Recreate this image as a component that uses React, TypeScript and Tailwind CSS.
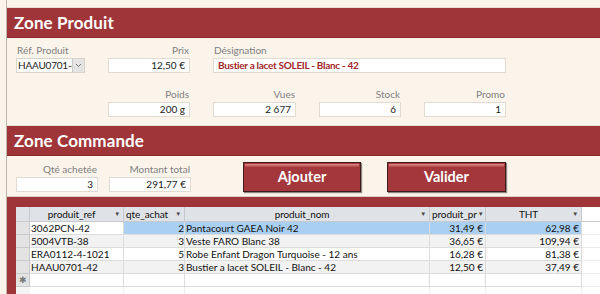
import React from 'react';

// ── Small pieces ─────────────────────────────────────────────────────────────
function Label({ text, right }: { text: string; right?: boolean }) {
  return (
    <div className={`h-[12px] text-[10px] leading-[12px] text-[#808080] ${right ? 'text-right pr-[1px]' : 'pl-[1px]'}`}>
      {text}
    </div>
  );
}

function Box({ value, className = '' }: { value: string; className?: string }) {
  return (
    <div
      className={`mt-[2px] h-[15px] bg-white border border-[#e3dbd0] text-[10px] leading-[13px] text-[#222] text-right pr-[4px] ${className}`}
    >
      {value}
    </div>
  );
}

function Band({ title }: { title: string }) {
  return (
    <div className="h-[31px] shrink-0 bg-[#9f3539] border-t border-[#e9dcd0] border-b border-b-[#8c2a2e] flex items-center pl-[7px]">
      <span className="text-white font-bold text-[17px] tracking-[0.1px]">{title}</span>
    </div>
  );
}

function Button({ text, className = '' }: { text: string; className?: string }) {
  return (
    <div
      className={`h-[30px] bg-[#a3373b] border border-[#3e1c1d] shadow-[1px_1px_1px_rgba(0,0,0,0.45)] relative flex items-center justify-center ${className}`}
    >
      <div className="absolute left-[1px] right-[1px] top-[1px] h-[3px] bg-gradient-to-b from-[#e08a8b] to-[#b04548]" />
      <span className="text-white font-bold text-[14.5px] relative">{text}</span>
    </div>
  );
}

// ── Datasheet ────────────────────────────────────────────────────────────────
const rows = [
  { ref: '3062PCN-42', qte: '2', nom: 'Pantacourt GAEA Noir 42', pr: '31,49 €', tht: '62,98 €' },
  { ref: '5004VTB-38', qte: '3', nom: 'Veste FARO Blanc 38', pr: '36,65 €', tht: '109,94 €' },
  { ref: 'ERA0112-4-1021', qte: '5', nom: 'Robe Enfant Dragon Turquoise - 12 ans', pr: '16,28 €', tht: '81,38 €' },
  { ref: 'HAAU0701-42', qte: '3', nom: 'Bustier a lacet SOLEIL - Blanc - 42', pr: '12,50 €', tht: '37,49 €' },
];

function Arrow() {
  return <span className="text-[6px] leading-none text-[#444] pr-[3px] pl-[1px]">▼</span>;
}

function HeadCell({ text, w, center = true }: { text: string; w: string; center?: boolean }) {
  return (
    <div className={`${w} h-full border-r border-[#c6c9ce] flex items-center`}>
      <span className={`flex-1 whitespace-nowrap ${center ? 'text-center' : 'pl-[2px]'}`}>{text}</span>
      <Arrow />
    </div>
  );
}

export default function App() {
  return (
    <div className="w-[600px] h-[294px] overflow-hidden bg-[#faf4ea] flex font-['Lato','Liberation_Sans',sans-serif]">
      <div className="w-[6px] shrink-0" />
      <div className="flex-1 flex flex-col border-l border-[#bdb6ad] min-w-0">
        <div className="h-[7px] shrink-0" />
        <Band title="Zone Produit" />

        {/* Zone produit */}
        <div className="h-[87px] shrink-0 pl-[9px] pt-[6px]">
          <div className="grid grid-cols-[69px_82px_83px_82px_82px] gap-x-[23px] gap-y-[15px]">
            <div>
              <Label text="Réf. Produit" />
              <div className="mt-[2px] h-[15px] flex bg-white border border-[#d9d3ca]">
                <span className="flex-1 overflow-hidden whitespace-nowrap text-[10px] leading-[13px] text-[#222] pl-[1px] tracking-[-0.2px]">HAAU0701-42</span>
                <span className="w-[12px] bg-[#e4e4e4] border-l border-[#c9c9c9] flex items-center justify-center">
                  <svg width="7" height="5" viewBox="0 0 7 5"><path d="M1 1 L3.5 3.5 L6 1" fill="none" stroke="#777" strokeWidth="1" /></svg>
                </span>
              </div>
            </div>
            <div>
              <Label text="Prix" right />
              <Box value="12,50 €" />
            </div>
            <div className="col-span-3">
              <Label text="Désignation" />
              <Box value="Bustier a lacet SOLEIL - Blanc - 42" className="!text-left pl-[4px] font-bold text-[#a3262b] tracking-[-0.3px]" />
            </div>

            <div />
            <div>
              <Label text="Poids" right />
              <Box value="200 g" />
            </div>
            <div>
              <Label text="Vues" right />
              <Box value="2 677" />
            </div>
            <div>
              <Label text="Stock" right />
              <Box value="6" />
            </div>
            <div>
              <Label text="Promo" right />
              <Box value="1" />
            </div>
          </div>
        </div>

        <Band title="Zone Commande" />

        {/* Zone commande */}
        <div className="h-[41px] shrink-0 pl-[9px] pt-[6px] flex border-b border-[#d8d0c4]">
          <div className="w-[82px] pt-[1px]">
            <Label text="Qté achetée" right />
            <Box value="3" />
          </div>
          <div className="w-[82px] ml-[11px] pt-[1px]">
            <Label text="Montant total" right />
            <Box value="291,77 €" />
          </div>
          <Button text="Ajouter" className="w-[118px] ml-[52px]" />
          <Button text="Valider" className="w-[119px] ml-[26px]" />
        </div>

        {/* Datasheet */}
        <div className="flex-1 bg-[#9f3539] pl-[9px] pt-[10px] min-h-0">
          <div className="h-full bg-white text-[10px] text-[#111]">
            <div className="h-[15px] flex bg-[#dfe2e7] border-b border-[#c6c9ce] tracking-[-0.1px]">
              <div className="w-[14px] border-r border-[#c6c9ce]" />
              <HeadCell text="produit_ref" w="w-[94px]" />
              <HeadCell text="qte_achat" w="w-[61px]" center={false} />
              <HeadCell text="produit_nom" w="w-[245px]" />
              <HeadCell text="produit_pr" w="w-[56px]" center={false} />
              <HeadCell text="THT" w="w-[96px]" />
              <div className="flex-1 bg-white" />
            </div>
            {rows.map((r, i) => {
              const sel = i === 0;
              const bg = sel ? 'bg-[#a9d0f3]' : i % 2 === 1 ? 'bg-[#f2f2f2]' : 'bg-white';
              return (
                <div key={r.ref} className="h-[13px] flex leading-[12px]">
                  <div className="w-[14px] bg-[#e3e3e3] border-r border-b border-[#c9c9c9]" />
                  <div className={`w-[94px] pl-[1px] border-r border-b border-[#dcdcdc] ${sel ? 'bg-white' : bg}`}>{r.ref}</div>
                  <div className={`w-[61px] text-right border-r border-b border-[#dcdcdc] ${bg}`}>{r.qte}</div>
                  <div className={`w-[245px] pl-[1px] whitespace-nowrap border-r border-b border-[#dcdcdc] ${bg}`}>{r.nom}</div>
                  <div className={`w-[56px] text-right pr-[2px] border-r border-b border-[#dcdcdc] ${bg}`}>{r.pr}</div>
                  <div className={`w-[96px] text-right pr-[2px] border-r border-b border-[#dcdcdc] ${bg}`}>{r.tht}</div>
                  <div className="flex-1 border-b border-[#ececec]" />
                </div>
              );
            })}
            <div className="h-[13px] flex">
              <div className="w-[14px] bg-[#e3e3e3] border-r border-b border-[#c9c9c9] text-[9px] leading-[12px] text-center text-[#777]">✱</div>
              <div className="w-[94px] border-r border-b border-[#dcdcdc]" />
              <div className="w-[61px] border-r border-b border-[#dcdcdc]" />
              <div className="w-[245px] border-r border-b border-[#dcdcdc]" />
              <div className="w-[56px] border-r border-b border-[#dcdcdc]" />
              <div className="w-[96px] border-r border-b border-[#dcdcdc]" />
              <div className="flex-1 border-b border-[#ececec]" />
            </div>
            <div className="h-[13px] flex">
              <div className="w-[14px] bg-[#f4f4f4]" />
              <div className="w-[94px] border-r border-[#ececec]" />
              <div className="w-[61px] border-r border-[#ececec]" />
              <div className="w-[245px] border-r border-[#ececec]" />
              <div className="w-[56px] border-r border-[#ececec]" />
              <div className="w-[96px] border-r border-[#ececec]" />
            </div>
          </div>
        </div>
      </div>
    </div>
  );
}
